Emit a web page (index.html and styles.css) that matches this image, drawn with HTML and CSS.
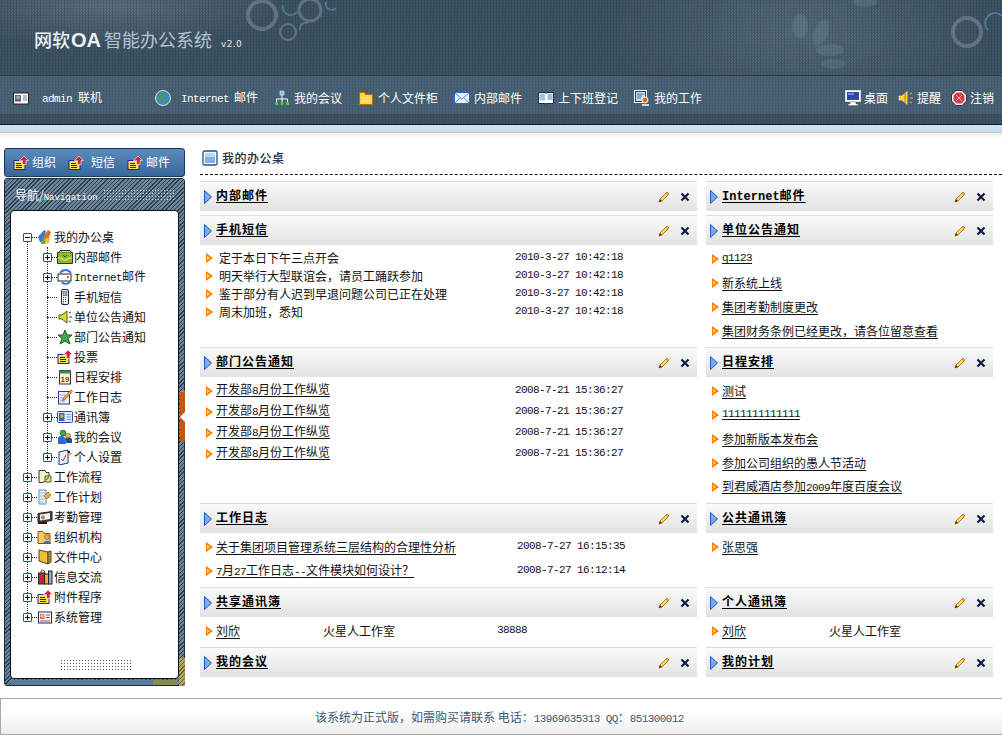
FILE: index.html
```html
<!DOCTYPE html>
<html lang="zh-CN">
<head>
    <meta charset="UTF-8">
    <title>网软OA智能办公系统</title>
    <link rel="stylesheet" href="styles.css">
</head>
<body>
    <svg class="sprite" xmlns="http://www.w3.org/2000/svg">
        <symbol id="i-card" viewBox="0 0 16 16"><rect x="0.5" y="3" width="15" height="11" fill="#fff" stroke="#222"/><rect x="2" y="5" width="6" height="6" fill="#3a78d0"/><circle cx="5" cy="7.5" r="1.7" fill="#e8a060"/><path d="M2 11h6" stroke="#c02020"/><path d="M10 6h4M10 8h4M10 10h4" stroke="#777"/></symbol>
        <symbol id="i-globe" viewBox="0 0 16 16"><circle cx="8" cy="8" r="7.5" fill="#3f86c8" stroke="#d8f0c0"/><path d="M4 4l4-1 1 3-3 2 1 4-2-1-2-4zM10 8l3 0 0 3-2 2z" fill="#4aa040"/></symbol>
        <symbol id="i-net" viewBox="0 0 16 16"><rect x="6" y="1" width="4" height="4" fill="#7ac0f0" stroke="#fff" stroke-width=".5"/><path d="M8 5v4M2.500 12v-3h11v3M8 9v3" stroke="#fff" fill="none"/><rect x="1" y="12" width="3" height="3" fill="#40d030"/><rect x="6.500" y="12" width="3" height="3" fill="#40d030"/><rect x="12" y="12" width="3" height="3" fill="#40d030"/></symbol>
        <symbol id="i-folder" viewBox="0 0 16 16"><path d="M1.500 2.500h5l1 2h7v10h-13z" fill="#fbd24a" stroke="#b87008"/><path d="M4 8h9M4 11h9" stroke="#fff2b0"/></symbol>
        <symbol id="i-mail" viewBox="0 0 16 16"><rect x="0.500" y="2.500" width="15" height="11" fill="#eaf3ff" stroke="#2a68d8"/><path d="M1 3l7 6 7-6M1 13l5-5M15 13l-5-5" fill="none" stroke="#5a90e0"/></symbol>
        <symbol id="i-book" viewBox="0 0 16 16"><path d="M0.500 2.500h7l.5 1 .5-1h7v11h-7l-.5 1-.5-1h-7z" fill="#fff" stroke="#1a2a50"/><path d="M2 5h5M2 7h5M2 9h5M9.500 5h5M9.500 7h5M9.500 9h5" stroke="#3a78b0"/><path d="M1 3h6v8h-6z" fill="#a0d0f0" opacity=".5"/></symbol>
        <symbol id="i-work" viewBox="0 0 16 16"><rect x="0.500" y="0.500" width="12" height="12" fill="#e8f0fa" stroke="#fff"/><rect x="1.500" y="1.500" width="10" height="10" fill="#cfe0f4" stroke="#2a3a60"/><path d="M3 4h7M3 6h5M3 8h4" stroke="#3a6ab0"/><circle cx="11" cy="10" r="3" fill="#e06a20" stroke="#fff"/><path d="M8 15h7" stroke="#fff" stroke-width="1.500"/></symbol>
        <symbol id="i-monitor" viewBox="0 0 16 16"><rect x="0.500" y="0.500" width="15" height="11" fill="#fff" stroke="#ddd"/><rect x="2" y="2" width="12" height="8" fill="#2a4aa8"/><path d="M3 3h6v2h-6z" fill="#6a8ad8"/><path d="M5 12h6v2h2v1.500h-10v-1.500h2z" fill="#fff" stroke="#555" stroke-width=".4"/></symbol>
        <symbol id="i-speaker" viewBox="0 0 16 16"><path d="M1 6h3l6-5v14l-6-5h-3z" fill="#ffd030" stroke="#fff" stroke-width=".6"/><path d="M7 3v10" stroke="#e06a10"/><path d="M12 4l2-1M12 8h3M12 12l2 1" stroke="#ffb020"/><path d="M10 1v14" stroke="#1a3ab0"/></symbol>
        <symbol id="i-stop" viewBox="0 0 16 16"><path d="M5 .5h6l4.500 4.500v6l-4.500 4.500h-6l-4.500-4.500v-6z" fill="#fff" stroke="#333"/><path d="M5.500 2.500h5l3 3v5l-3 3h-5l-3-3v-5z" fill="#d83a4a"/><path d="M5 5l6 6M11 5l-6 6" stroke="#f0b0b0"/></symbol>
        <symbol id="i-up" viewBox="0 0 16 16"><rect x="1" y="5.500" width="11" height="9" fill="#ffe14d" stroke="#1a2a8a"/><path d="M3 8.500h5M3 10.500h6M3 12.500h6" stroke="#1a2a8a"/><path d="M11 1l4.500 4.500h-2.500v4h-3.500v-4h-3z" fill="#e0202a" stroke="#fff" stroke-width=".6"/></symbol>
        <symbol id="i-desk" viewBox="0 0 16 16"><path d="M1 8l6-7 2 1-2 7-1 5-3-1z" fill="#3a7ac8"/><path d="M6 8l5-7 3 2-3 8z" fill="#ea6a20"/><path d="M4 15l2-6 3 0-1 6z" fill="#6ab030"/><path d="M8 15l1-6 4 0-1 5z" fill="#f0c030"/></symbol>
        <symbol id="i-inbox" viewBox="0 0 16 16"><path d="M.5 3.500h15v11h-15z" fill="#90b820" stroke="#333"/><path d="M1 9h4l1 2h4l1-2h4" fill="none" stroke="#e8f0a0"/><path d="M2 3.500l1-2h10l1 2" fill="#c8e050" stroke="#333"/><path d="M6 6l2 2 2-2" stroke="#335010" fill="none"/></symbol>
        <symbol id="i-imail" viewBox="0 0 16 16"><rect x="1" y="5" width="13" height="7" fill="#fff" stroke="#222"/><path d="M3 4c3-4 8-4 11 0" fill="none" stroke="#2a78d8" stroke-width="1.800"/><path d="M13 13c-3 3-7 2-8 0" fill="none" stroke="#2a78d8" stroke-width="1.800"/><circle cx="11" cy="8" r="1" fill="#d02020"/></symbol>
        <symbol id="i-phone" viewBox="0 0 16 16"><rect x="4.500" y="0.500" width="7" height="15" rx="1.500" fill="#f4f4ee" stroke="#222"/><rect x="6" y="2.500" width="4" height="4" fill="#90b8d0" stroke="#333" stroke-width=".5"/><path d="M6 8.500h4M6 10.500h4M6 12.500h4" stroke="#444" stroke-dasharray="1 1"/><path d="M6 14h1" stroke="#d02020"/></symbol>
        <symbol id="i-horn" viewBox="0 0 16 16"><path d="M2 6h3l5-4v12l-5-4h-3z" fill="#dcdc30" stroke="#55551a"/><path d="M12 4l2-1M12 8h3M12 12l2 1" stroke="#333"/></symbol>
        <symbol id="i-star" viewBox="0 0 16 16"><path d="M8 1l2 5h5l-4 3.500 2 5.500-5-3-5 3 2-5.500-4-3.500h5z" fill="#4aa850" stroke="#1a5a2a"/></symbol>
        <symbol id="i-cal" viewBox="0 0 16 16"><rect x="2.500" y="1.500" width="11" height="13.500" fill="#f8f2d8" stroke="#333"/><path d="M2.500 1.500h11v3h-11z" fill="#3a8a50"/><text class="cal-text" x="8" y="12.500" text-anchor="middle">19</text></symbol>
        <symbol id="i-note" viewBox="0 0 16 16"><rect x="1.500" y="2.500" width="11" height="12.500" fill="#e8eeff" stroke="#223a90"/><path d="M3 6h5M3 9h4M3 12h5" stroke="#8aa0d0"/><path d="M14 1l1.500 1.500-7.500 8-2.500 1 1-2.500z" fill="#f0b030" stroke="#7a4a10" stroke-width=".7"/></symbol>
        <symbol id="i-addr" viewBox="0 0 16 16"><rect x="0.500" y="2.500" width="15" height="11" rx="1" fill="#dfeafc" stroke="#2a4ab0"/><rect x="2" y="4" width="5.500" height="8" fill="#2a68d8"/><circle cx="4.800" cy="7" r="1.800" fill="#f0a040"/><path d="M9.500 5.500h4.500M9.500 8h4.500M9.500 10.500h4.500" stroke="#8a9ab0"/></symbol>
        <symbol id="i-meet" viewBox="0 0 16 16"><circle cx="6" cy="4" r="3" fill="#3ab040" stroke="#222" stroke-width=".5"/><circle cx="11" cy="7" r="2.500" fill="#f0c030" stroke="#222" stroke-width=".5"/><path d="M1 9c2-3 5-3 7 0l1 6h-8z" fill="#2a68d8"/><path d="M8 10c2-2 5-2 7 0v4h-6z" fill="#2a4a90"/></symbol>
        <symbol id="i-set" viewBox="0 0 16 16"><path d="M2 3l9-2v13l-9 2z" fill="#e8f0ff" stroke="#1a3a80"/><path d="M4 10l2 2 3-6" stroke="#d02040" fill="none"/><path d="M11 7l4-3" stroke="#e0a030" stroke-width="1.500"/><circle cx="12" cy="3" r="1.300" fill="#222"/></symbol>
        <symbol id="i-flow" viewBox="0 0 16 16"><path d="M2 1.500h6l1 2h3v6l-6 4h-4z" fill="#f8f0d0" stroke="#333"/><path d="M8 7h6v6h-6z" fill="#f0e080" stroke="#5a5a1a"/><path d="M9 11l3-3" stroke="#40a030" stroke-width="1.500"/></symbol>
        <symbol id="i-plan" viewBox="0 0 16 16"><path d="M2 1h7v14h-7z" fill="#eef4ff" stroke="#5a8ac0"/><path d="M3 4h5M3 7h4M3 10h5M3 13h3" stroke="#8ab0d8"/><path d="M7 7l4-4 3 3-4 4z" fill="#f0b020" stroke="#7a4a10" stroke-width=".6"/></symbol>
        <symbol id="i-att" viewBox="0 0 16 16"><path d="M1 4.500l14-2v9l-14 2z" fill="#444" stroke="#222"/><path d="M3 5.500l10-1.500v6l-10 1.500z" fill="#f4f4f4"/><circle cx="6" cy="8.500" r="2" fill="#c08040"/><path d="M1 14h9" stroke="#222" stroke-width="2"/></symbol>
        <symbol id="i-org" viewBox="0 0 16 16"><path d="M1 2.500h5l1 2h6v10h-12z" fill="#f8c860" stroke="#8a5a10"/><circle cx="10" cy="8" r="2.500" fill="#f0a060" stroke="#7a3a10" stroke-width=".5"/><path d="M6 15c0-4 8-4 8 0z" fill="#2a68d8"/></symbol>
        <symbol id="i-file" viewBox="0 0 16 16"><path d="M2 1l9 2v12l-9-3z" fill="#f0c030" stroke="#444"/><path d="M11 3l3-1v11l-3 2z" fill="#c89010" stroke="#444"/></symbol>
        <symbol id="i-gift" viewBox="0 0 16 16"><rect x="1.500" y="4" width="6" height="11" fill="#d02040" stroke="#222"/><rect x="7.500" y="5" width="4" height="10" fill="#f0b020" stroke="#222"/><rect x="11.500" y="2" width="3.500" height="13" fill="#a0a8c0" stroke="#222"/><path d="M4 4c0-4 4-4 4 1" fill="none" stroke="#222"/></symbol>
        <symbol id="i-sys" viewBox="0 0 16 16"><rect x="1.500" y="3" width="13" height="11" fill="#fff" stroke="#1a2a60"/><rect x="3" y="5" width="4.500" height="5" fill="#e06a50"/><circle cx="5.200" cy="7" r="1.500" fill="#f8d0a0"/><path d="M9 6h4M9 8.500h4M3 12h10" stroke="#d03040"/></symbol>
        <symbol id="i-square" viewBox="0 0 16 16"><rect x="1" y="1" width="14" height="14" rx="1.500" fill="#fff" stroke="#1f4f90" stroke-width="1.300"/><rect x="3" y="3" width="10" height="10" fill="#7fb2dc"/><rect x="3" y="3" width="10" height="4" fill="#b8d6ee"/></symbol>
        <symbol id="i-tri" viewBox="0 0 8 14"><path d="M0.500 0.500l7 6.500-7 6.500z" fill="#7aa8e8" stroke="#1f5cc0"/></symbol>
        <symbol id="i-bullet" viewBox="0 0 7 10"><path d="M0 0l7 5-7 5z" fill="#ff7a00"/><path d="M1 2.500l3 2.500-3 2.500z" fill="#ffd040"/></symbol>
        <symbol id="i-pencil" viewBox="0 0 12 12"><path d="M9 1l2 2-7 7-3 1 1-3z" fill="#ffd860" stroke="#b07818" stroke-width=".9"/><path d="M8 2l2 2" stroke="#e08020"/><path d="M1 11l1-3 2 2z" fill="#4a3010"/></symbol>
        <symbol id="i-close" viewBox="0 0 10 10"><path d="M1.500 1.500l7 7M8.500 1.500l-7 7" stroke="#0c1c44" stroke-width="2.200"/></symbol>
    </svg>

    <header class="top">
        <svg class="top-decor" width="1002" height="124" xmlns="http://www.w3.org/2000/svg">
            <g fill="none" stroke="#71828f" opacity=".7">
                <circle cx="262" cy="15" r="14" stroke-width="4"/>
                <circle cx="310" cy="10" r="11" stroke-width="3"/>
                <circle cx="288" cy="32" r="8" stroke-width="2"/>
                <circle cx="967" cy="32" r="14" stroke-width="4"/>
            </g>
            <g fill="none" stroke="#4f81a8" stroke-width="1.500">
                <path d="M283 5a8 8 0 0 0 14 7"/>
                <path d="M300 30a6 6 0 0 1 8-7"/>
                <path d="M326 2a6 6 0 0 0 10 6"/>
                <path d="M988 30a9 9 0 0 1 14-14"/>
            </g>
            <g fill="#7d909d" opacity=".25">
                <ellipse cx="800" cy="26" rx="8" ry="12"/>
                <ellipse cx="821" cy="33" rx="7" ry="14" transform="rotate(20 821 33)"/>
                <ellipse cx="830" cy="50" rx="14" ry="6"/>
                <ellipse cx="833" cy="64" rx="12" ry="5"/>
                <ellipse cx="865" cy="2" rx="12" ry="5"/>
            </g>
        </svg>
        <div class="brand">
            <span class="brand-main">网软<span class="brand-oa">OA</span></span>
            <span class="brand-sub">智能办公系统</span>
            <span class="brand-ver">v2.0</span>
        </div>
        <nav class="menu">
            <div class="menu-user">
                <svg class="icon"><use href="#i-card"/></svg>
                <span><span class="latin">admin </span>联机</span>
            </div>
            <div class="menu-links">
                <a class="menu-item menu-item-wide"><svg class="icon"><use href="#i-globe"/></svg><span><span class="latin">Internet</span><span class="menu-space">邮件</span></span></a>
                <a class="menu-item"><svg class="icon"><use href="#i-net"/></svg>我的会议</a>
                <a class="menu-item"><svg class="icon"><use href="#i-folder"/></svg>个人文件柜</a>
                <a class="menu-item"><svg class="icon"><use href="#i-mail"/></svg>内部邮件</a>
                <a class="menu-item"><svg class="icon"><use href="#i-book"/></svg>上下班登记</a>
                <a class="menu-item"><svg class="icon"><use href="#i-work"/></svg>我的工作</a>
            </div>
            <div class="menu-right">
                <a class="menu-item"><svg class="icon"><use href="#i-monitor"/></svg>桌面</a>
                <a class="menu-item"><svg class="icon"><use href="#i-speaker"/></svg>提醒</a>
                <a class="menu-item"><svg class="icon"><use href="#i-stop"/></svg>注销</a>
            </div>
        </nav>
        <div class="top-strip"></div>
    </header>
    <div class="sub-strip"></div>

    <div class="content">
        <aside class="side">
            <div class="side-tabs">
                <a class="side-tab"><svg class="icon"><use href="#i-up"/></svg>组织</a>
                <a class="side-tab side-tab-wide"><svg class="icon"><use href="#i-up"/></svg>短信</a>
                <a class="side-tab"><svg class="icon"><use href="#i-up"/></svg>邮件</a>
            </div>
            <div class="side-panel">
                <div class="side-head">
                    <span>导航/<span class="side-latin">Navigation</span></span>
                    <i class="side-dots"></i>
                </div>
                <div class="side-inner">
                    <ul class="tree">
                        <li class="tree-row"><i class="tree-box tree-minus"></i><i class="tree-dots"></i><svg class="icon"><use href="#i-desk"/></svg><span>我的办公桌</span></li>
                        <li>
                            <ul class="tree-sub">
                                <li class="tree-row"><i class="tree-box"></i><i class="tree-dots"></i><svg class="icon"><use href="#i-inbox"/></svg><span>内部邮件</span></li>
                                <li class="tree-row"><i class="tree-box"></i><i class="tree-dots"></i><svg class="icon"><use href="#i-imail"/></svg><span><span class="latin">Internet</span>邮件</span></li>
                                <li class="tree-row"><i class="tree-dots tree-leaf"></i><svg class="icon"><use href="#i-phone"/></svg><span>手机短信</span></li>
                                <li class="tree-row"><i class="tree-dots tree-leaf"></i><svg class="icon"><use href="#i-horn"/></svg><span>单位公告通知</span></li>
                                <li class="tree-row"><i class="tree-dots tree-leaf"></i><svg class="icon"><use href="#i-star"/></svg><span>部门公告通知</span></li>
                                <li class="tree-row"><i class="tree-dots tree-leaf"></i><svg class="icon"><use href="#i-up"/></svg><span>投票</span></li>
                                <li class="tree-row"><i class="tree-dots tree-leaf"></i><svg class="icon"><use href="#i-cal"/></svg><span>日程安排</span></li>
                                <li class="tree-row"><i class="tree-dots tree-leaf"></i><svg class="icon"><use href="#i-note"/></svg><span>工作日志</span></li>
                                <li class="tree-row"><i class="tree-box"></i><i class="tree-dots"></i><svg class="icon"><use href="#i-addr"/></svg><span>通讯簿</span></li>
                                <li class="tree-row"><i class="tree-box"></i><i class="tree-dots"></i><svg class="icon"><use href="#i-meet"/></svg><span>我的会议</span></li>
                                <li class="tree-row"><i class="tree-box"></i><i class="tree-dots"></i><svg class="icon"><use href="#i-set"/></svg><span>个人设置</span></li>
                            </ul>
                        </li>
                        <li class="tree-row"><i class="tree-box"></i><i class="tree-dots"></i><svg class="icon"><use href="#i-flow"/></svg><span>工作流程</span></li>
                        <li class="tree-row"><i class="tree-box"></i><i class="tree-dots"></i><svg class="icon"><use href="#i-plan"/></svg><span>工作计划</span></li>
                        <li class="tree-row"><i class="tree-box"></i><i class="tree-dots"></i><svg class="icon"><use href="#i-att"/></svg><span>考勤管理</span></li>
                        <li class="tree-row"><i class="tree-box"></i><i class="tree-dots"></i><svg class="icon"><use href="#i-org"/></svg><span>组织机构</span></li>
                        <li class="tree-row"><i class="tree-box"></i><i class="tree-dots"></i><svg class="icon"><use href="#i-file"/></svg><span>文件中心</span></li>
                        <li class="tree-row"><i class="tree-box"></i><i class="tree-dots"></i><svg class="icon"><use href="#i-gift"/></svg><span>信息交流</span></li>
                        <li class="tree-row"><i class="tree-box"></i><i class="tree-dots"></i><svg class="icon"><use href="#i-up"/></svg><span>附件程序</span></li>
                        <li class="tree-row"><i class="tree-box"></i><i class="tree-dots"></i><svg class="icon"><use href="#i-sys"/></svg><span>系统管理</span></li>
                    </ul>
                    <i class="inner-dots"></i>
                </div>
                <i class="side-corner"></i>
                <i class="side-handle"></i>
            </div>
        </aside>

        <main class="main">
            <h2 class="page-title"><svg class="icon"><use href="#i-square"/></svg><span>我的办公桌</span></h2>
            <div class="board">
                <section class="box">
                    <div class="box-head"><svg class="tri"><use href="#i-tri"/></svg><a class="box-title">内部邮件</a><svg class="pencil"><use href="#i-pencil"/></svg><svg class="close"><use href="#i-close"/></svg></div>
                </section>
                <section class="box">
                    <div class="box-head"><svg class="tri"><use href="#i-tri"/></svg><a class="box-title"><span class="latin-bold">Internet</span>邮件</a><svg class="pencil"><use href="#i-pencil"/></svg><svg class="close"><use href="#i-close"/></svg></div>
                </section>

                <section class="box">
                    <div class="box-head"><svg class="tri"><use href="#i-tri"/></svg><a class="box-title">手机短信</a><svg class="pencil"><use href="#i-pencil"/></svg><svg class="close"><use href="#i-close"/></svg></div>
                    <div class="box-body body-sms">
                        <div class="row"><svg class="bullet"><use href="#i-bullet"/></svg><span class="cell-title sms-text">定于本日下午三点开会</span><span class="latin">2010-3-27 10:42:18</span></div>
                        <div class="row"><svg class="bullet"><use href="#i-bullet"/></svg><span class="cell-title sms-text">明天举行大型联谊会，请员工踊跃参加</span><span class="latin">2010-3-27 10:42:18</span></div>
                        <div class="row"><svg class="bullet"><use href="#i-bullet"/></svg><span class="cell-title sms-text">鉴于部分有人迟到早退问题公司已正在处理</span><span class="latin">2010-3-27 10:42:18</span></div>
                        <div class="row"><svg class="bullet"><use href="#i-bullet"/></svg><span class="cell-title sms-text">周末加班，悉知</span><span class="latin">2010-3-27 10:42:18</span></div>
                    </div>
                </section>
                <section class="box">
                    <div class="box-head"><svg class="tri"><use href="#i-tri"/></svg><a class="box-title">单位公告通知</a><svg class="pencil"><use href="#i-pencil"/></svg><svg class="close"><use href="#i-close"/></svg></div>
                    <div class="box-body body-list">
                        <div class="row"><svg class="bullet"><use href="#i-bullet"/></svg><a class="link latin">q1123</a></div>
                        <div class="row"><svg class="bullet"><use href="#i-bullet"/></svg><a class="link">新系统上线</a></div>
                        <div class="row"><svg class="bullet"><use href="#i-bullet"/></svg><a class="link">集团考勤制度更改</a></div>
                        <div class="row"><svg class="bullet"><use href="#i-bullet"/></svg><a class="link">集团财务条例已经更改，请各位留意查看</a></div>
                    </div>
                </section>

                <section class="box">
                    <div class="box-head"><svg class="tri"><use href="#i-tri"/></svg><a class="box-title">部门公告通知</a><svg class="pencil"><use href="#i-pencil"/></svg><svg class="close"><use href="#i-close"/></svg></div>
                    <div class="box-body body-notice">
                        <div class="row"><svg class="bullet"><use href="#i-bullet"/></svg><span class="cell-title"><a class="link">开发部<span class="latin">8</span>月份工作纵览</a></span><span class="latin">2008-7-21 15:36:27</span></div>
                        <div class="row"><svg class="bullet"><use href="#i-bullet"/></svg><span class="cell-title"><a class="link">开发部<span class="latin">8</span>月份工作纵览</a></span><span class="latin">2008-7-21 15:36:27</span></div>
                        <div class="row"><svg class="bullet"><use href="#i-bullet"/></svg><span class="cell-title"><a class="link">开发部<span class="latin">8</span>月份工作纵览</a></span><span class="latin">2008-7-21 15:36:27</span></div>
                        <div class="row"><svg class="bullet"><use href="#i-bullet"/></svg><span class="cell-title"><a class="link">开发部<span class="latin">8</span>月份工作纵览</a></span><span class="latin">2008-7-21 15:36:27</span></div>
                    </div>
                </section>
                <section class="box">
                    <div class="box-head"><svg class="tri"><use href="#i-tri"/></svg><a class="box-title">日程安排</a><svg class="pencil"><use href="#i-pencil"/></svg><svg class="close"><use href="#i-close"/></svg></div>
                    <div class="box-body body-list">
                        <div class="row"><svg class="bullet"><use href="#i-bullet"/></svg><a class="link">测试</a></div>
                        <div class="row"><svg class="bullet"><use href="#i-bullet"/></svg><a class="link latin">1111111111111</a></div>
                        <div class="row"><svg class="bullet"><use href="#i-bullet"/></svg><a class="link">参加新版本发布会</a></div>
                        <div class="row"><svg class="bullet"><use href="#i-bullet"/></svg><a class="link">参加公司组织的愚人节活动</a></div>
                        <div class="row"><svg class="bullet"><use href="#i-bullet"/></svg><a class="link">到君威酒店参加<span class="latin">2009</span>年度百度会议</a></div>
                    </div>
                </section>

                <section class="box">
                    <div class="box-head"><svg class="tri"><use href="#i-tri"/></svg><a class="box-title">工作日志</a><svg class="pencil"><use href="#i-pencil"/></svg><svg class="close"><use href="#i-close"/></svg></div>
                    <div class="box-body body-list">
                        <div class="row"><svg class="bullet"><use href="#i-bullet"/></svg><span class="cell-title cell-log"><a class="link">关于集团项目管理系统三层结构的合理性分析</a></span><span class="latin">2008-7-27 16:15:35</span></div>
                        <div class="row"><svg class="bullet"><use href="#i-bullet"/></svg><span class="cell-title cell-log"><a class="link"><span class="latin">7</span>月<span class="latin">27</span>工作日志<span class="latin">--</span>文件模块如何设计？</a></span><span class="latin">2008-7-27 16:12:14</span></div>
                    </div>
                </section>
                <section class="box">
                    <div class="box-head"><svg class="tri"><use href="#i-tri"/></svg><a class="box-title">公共通讯簿</a><svg class="pencil"><use href="#i-pencil"/></svg><svg class="close"><use href="#i-close"/></svg></div>
                    <div class="box-body body-list">
                        <div class="row"><svg class="bullet"><use href="#i-bullet"/></svg><a class="link">张思强</a></div>
                    </div>
                </section>

                <section class="box">
                    <div class="box-head"><svg class="tri"><use href="#i-tri"/></svg><a class="box-title">共享通讯簿</a><svg class="pencil"><use href="#i-pencil"/></svg><svg class="close"><use href="#i-close"/></svg></div>
                    <div class="box-body body-list">
                        <div class="row"><svg class="bullet"><use href="#i-bullet"/></svg><span class="cell-name"><a class="link">刘欣</a></span><span class="cell-org">火星人工作室</span><span class="latin">38888</span></div>
                    </div>
                </section>
                <section class="box">
                    <div class="box-head"><svg class="tri"><use href="#i-tri"/></svg><a class="box-title">个人通讯簿</a><svg class="pencil"><use href="#i-pencil"/></svg><svg class="close"><use href="#i-close"/></svg></div>
                    <div class="box-body body-list">
                        <div class="row"><svg class="bullet"><use href="#i-bullet"/></svg><span class="cell-name"><a class="link">刘欣</a></span><span class="cell-org">火星人工作室</span></div>
                    </div>
                </section>

                <section class="box">
                    <div class="box-head"><svg class="tri"><use href="#i-tri"/></svg><a class="box-title">我的会议</a><svg class="pencil"><use href="#i-pencil"/></svg><svg class="close"><use href="#i-close"/></svg></div>
                </section>
                <section class="box">
                    <div class="box-head"><svg class="tri"><use href="#i-tri"/></svg><a class="box-title">我的计划</a><svg class="pencil"><use href="#i-pencil"/></svg><svg class="close"><use href="#i-close"/></svg></div>
                </section>
            </div>
        </main>
    </div>

    <footer class="foot">该系统为正式版，如需购买请联系 电话：<span class="latin">13969635313 QQ</span>：<span class="latin">851300012</span></footer>
</body>
</html>
```

FILE: styles.css
```css
* { margin: 0; padding: 0; box-sizing: border-box; }
html, body { height: 100%; }
body { display: flex; flex-direction: column; overflow: hidden; background: #fff; color: #111; font: 12px/1.2 "Noto Sans CJK SC", sans-serif; }
a { color: inherit; }
ul { list-style: none; }
i { display: block; font-style: normal; }
.sprite { display: none; }
.icon { width: 16px; height: 16px; flex: none; display: block; }
.latin { font-family: "Liberation Mono", monospace; font-size: 11px; letter-spacing: -.6px; }
.latin-bold { font-family: "Liberation Mono", monospace; font-size: 12px; font-weight: bold; letter-spacing: 0; line-height: 1; }

/* top */
.top { position: relative; flex: none; height: 125px; border-bottom: 1px solid #0c1a24; color: #fff; background: repeating-conic-gradient(rgba(0, 0, 0, .14) 0 25%, transparent 0 50%) 0 0 / 3px 3px, radial-gradient(ellipse 190px 90px at 800px 30px, #566c7c, transparent), radial-gradient(ellipse 170px 40px at 110px 6px, #5c7080, transparent), #405666; }
.top-decor { position: absolute; left: 0; top: 0; }
.brand { position: relative; height: 76px; padding: 28px 0 0 34px; display: flex; align-items: baseline; border-bottom: 1px solid #2a3c4a; }
.brand-main { font-size: 18px; font-weight: 500; color: #eef2f4; }
.brand-oa { font-family: "Liberation Sans", sans-serif; font-size: 20px; font-weight: bold; margin-left: 1px; }
.brand-sub { font-size: 18px; margin-left: 3px; color: #b4c6d4; }
.brand-ver { font-family: "DejaVu Sans", sans-serif; font-size: 9px; letter-spacing: .4px; margin-left: 9px; color: #e8e8e8; }
.menu { position: relative; height: 39px; padding-top: 14px; display: flex; align-items: flex-start; background: repeating-conic-gradient(rgba(0, 0, 0, .1) 0 25%, transparent 0 50%) 0 0 / 3px 3px, #4a6478; border-bottom: 1px solid #33495a; }
.menu-user { width: 155px; padding-left: 13px; display: flex; align-items: center; gap: 13px; }
.menu-links { display: flex; gap: 16px; }
.menu-right { margin-left: auto; padding-right: 8px; display: flex; gap: 10px; }
.menu-item { display: flex; align-items: center; gap: 4px; }
.menu-right .menu-item { gap: 3px; }
.menu-item-wide { gap: 10px; }
.menu-space { margin-left: 5px; }
.top-strip { position: relative; height: 9px; }
.sub-strip { flex: none; height: 8px; background: linear-gradient(#d4e4f4, #c8dcf0); border-bottom: 1px solid #c8c8c8; }

/* layout */
.content { flex: 1; display: flex; min-height: 0; background: linear-gradient(#f2f2f2, #fff 6px); }

/* sidebar */
.side { width: 200px; flex: none; padding: 15px 0 0 4px; }
.side-tabs { width: 181px; height: 29px; display: flex; align-items: center; padding-left: 8px; gap: 12px; border: 1px solid #1a3560; border-radius: 3px; color: #fff; background: linear-gradient(#5c8cbc, #38689c); }
.side-tab { display: flex; align-items: center; gap: 3px; }
.side-tab-wide { gap: 7px; }
.side-panel { position: relative; width: 181px; height: 508px; margin-top: 1px; padding: 0 5px 6px; display: flex; flex-direction: column; border-radius: 3px; border: 1px solid #1c2a38; background: repeating-linear-gradient(135deg, #2c4052 0 1px, #6a8498 1px 3px); }
.side-head { height: 31px; padding: 9px 0 0 5px; display: flex; color: #fff; white-space: nowrap; gap: 5px; }
.side-latin { font-family: "Liberation Mono", monospace; font-size: 9px; }
.side-dots { width: 72px; height: 11px; margin-top: 1px; background: radial-gradient(circle, #c8d4dc 0.8px, transparent 1px) 0 0 / 3px 3px; }
.side-inner { flex: 1; min-height: 0; display: flex; flex-direction: column; padding: 16px 0 7px 12px; background: #fff; border: 1px solid #111; border-radius: 4px; }
.inner-dots { width: 72px; height: 12px; margin: auto 0 0 37px; background: radial-gradient(circle, #555 0.7px, transparent 1px) 0 0 / 3px 3px; }
.side-corner { position: absolute; right: -1px; bottom: -1px; width: 6px; height: 28px; background: repeating-linear-gradient(135deg, #6a6a30 0 1px, #b0a860 1px 3px); }
.side-handle { position: absolute; right: -1px; top: 212px; width: 5px; height: 50px; background: #c2561a; border-top: 1px solid #e08a40; }
.side-handle::after { content: ""; position: absolute; left: 0; top: 20px; border: 5px solid transparent; border-left: 0; border-right-color: #fff; }
.side-panel::after { content: ""; position: absolute; left: 6px; right: 6px; bottom: 0; height: 5px; background: linear-gradient(90deg, #5a7c9a 85%, #8a8a50 85%); }

/* tree */
.tree { position: relative; }
.tree::before { content: ""; position: absolute; left: 4px; top: 14px; bottom: 10px; border-left: 1px dotted #222; }
.tree-sub { position: relative; padding-left: 20px; }
.tree-sub::before { content: ""; position: absolute; left: 24px; top: 0; bottom: 10px; border-left: 1px dotted #222; }
.tree-row { position: relative; height: 20px; display: flex; align-items: center; }
.tree-row > span { margin-left: 1px; font-size: 12px; }
.tree-box { position: relative; width: 9px; height: 9px; flex: none; background: #fff; border: 1px solid #2a4ab0; border-radius: 1px; }
.tree-box::before { content: ""; position: absolute; left: 1px; top: 3px; width: 5px; height: 1px; background: #111; }
.tree-box::after { content: ""; position: absolute; left: 3px; top: 1px; width: 1px; height: 5px; background: #111; }
.tree-box.tree-minus::after { display: none; }
.tree-dots { width: 5px; flex: none; border-top: 1px dotted #222; }
.tree-leaf { width: 10px; margin-left: 4px; }

/* main */
.main { flex: 1; min-width: 0; }
.page-title { height: 42px; padding: 17px 0 0 2px; display: flex; align-items: flex-start; gap: 4px; font-size: 12px; letter-spacing: .5px; color: #1c2c4c; font-weight: 500; border-bottom: 1px dashed #111; }
.page-title span { margin-top: 1px; }
.board { display: grid; grid-template-columns: 497px 287px; grid-template-rows: 34px 132px 156px 84px 60px 34px; column-gap: 9px; margin-top: 6px; }
.box-head { height: 30px; padding: 0 7px 0 4px; display: flex; align-items: center; border-top: 1px solid #dcdcdc; background: linear-gradient(#fafafa, #e2e2e2); }
.tri { width: 8px; height: 14px; flex: none; }
.box-title { margin: 0 0 2px 4px; font-weight: bold; letter-spacing: 1px; color: #000; text-decoration: underline; text-underline-offset: 2px; }
.pencil { width: 12px; height: 12px; margin-left: auto; }
.close { width: 10px; height: 10px; margin-left: 10px; }
.box-body { padding-left: 6px; }
.body-sms { padding-top: 4px; }
.body-sms .row { height: 18px; }
.body-notice { padding-top: 3px; }
.body-notice .row { height: 21px; }
.body-list { padding-top: 2px; }
.row { height: 24px; display: flex; align-items: center; white-space: nowrap; }
.bullet { width: 7px; height: 10px; flex: none; margin-right: 3px; }
.link { text-decoration: underline; text-underline-offset: 2px; }
.cell-title { width: 299px; flex: none; }
.cell-log { width: 301px; }
.sms-text { padding-left: 3px; }
.cell-name { width: 107px; flex: none; }
.cell-org { width: 174px; flex: none; }
.cal-text { font: bold 8px "Liberation Sans", sans-serif; fill: #c02020; }

/* footer */
.foot { flex: none; height: 37px; padding-left: 314px; line-height: 35px; color: #3c5a70; border: 1px solid #a8a8a8; border-right: 0; background: linear-gradient(#fff 40%, #ececec); }
```
